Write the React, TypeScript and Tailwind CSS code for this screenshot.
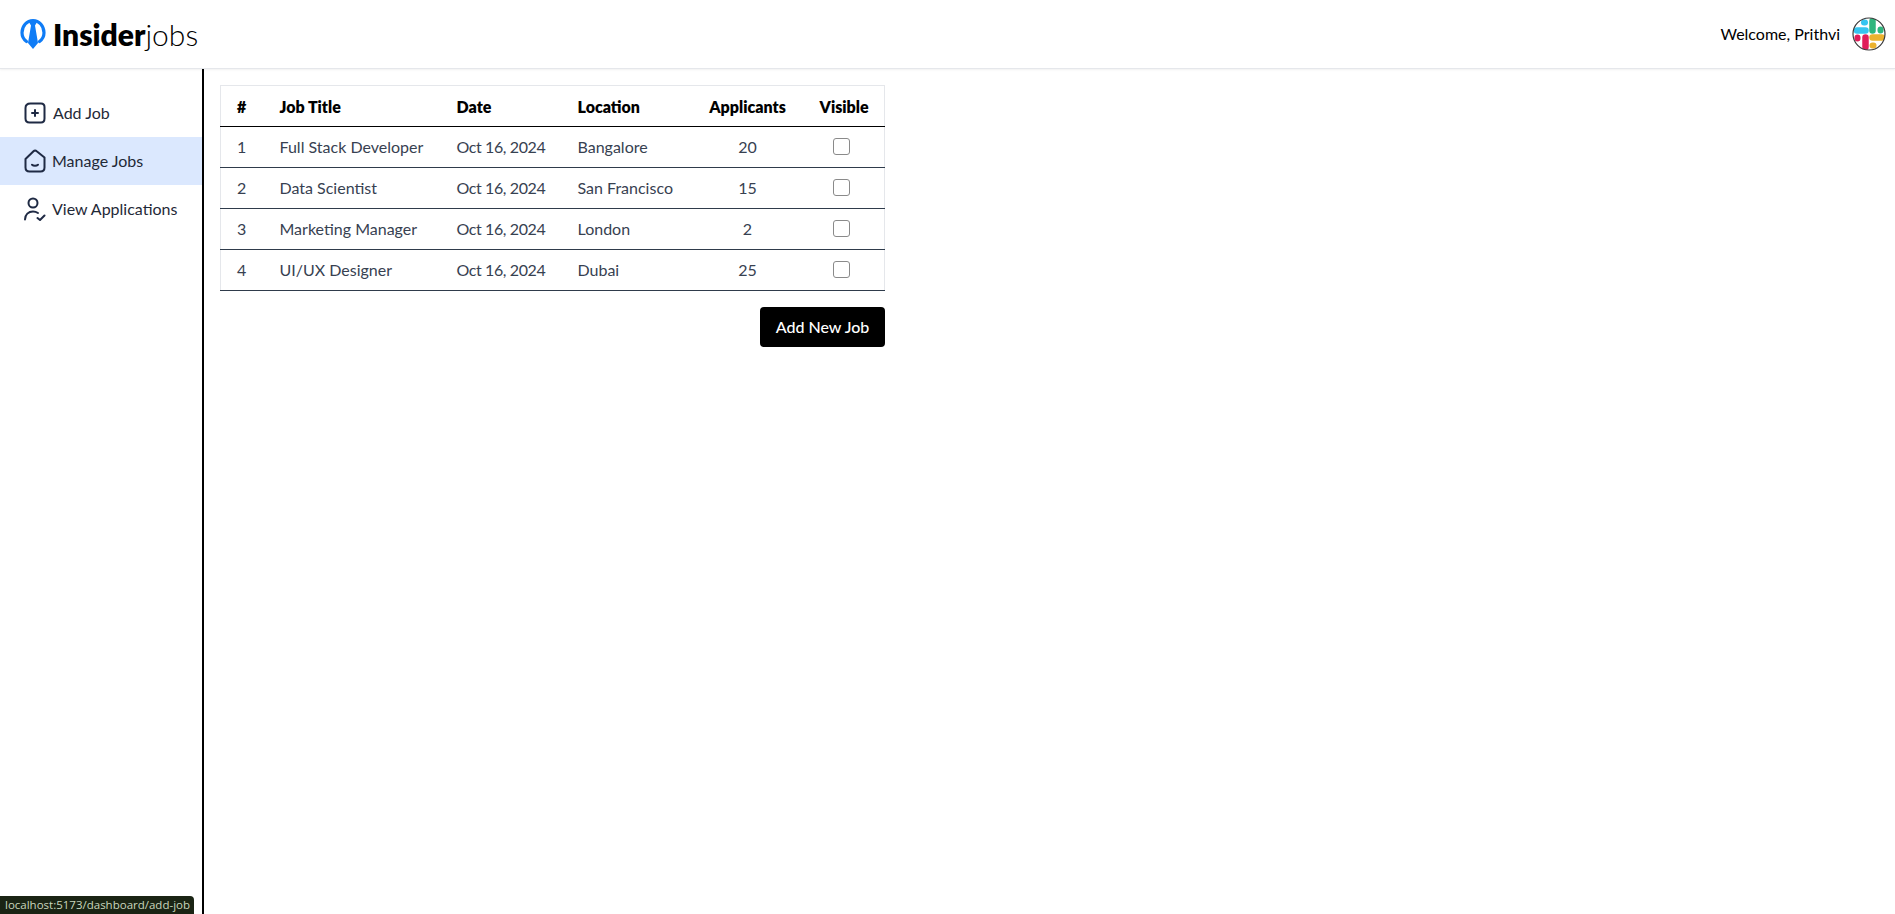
import React from "react";

const jobs = [
  { id: 1, title: "Full Stack Developer", date: "Oct 16, 2024", location: "Bangalore", applicants: 20 },
  { id: 2, title: "Data Scientist", date: "Oct 16, 2024", location: "San Francisco", applicants: 15 },
  { id: 3, title: "Marketing Manager", date: "Oct 16, 2024", location: "London", applicants: 2 },
  { id: 4, title: "UI/UX Designer", date: "Oct 16, 2024", location: "Dubai", applicants: 25 },
];

const Logo = () => (
  <svg width="26" height="32" viewBox="0 0 26 32" fill="none">
    <path d="M6.500 23.500C3.800 21.500 2 18.500 2 14.800C2 7.800 7 2.500 13 2.500C19 2.500 24 7.800 24 14.800C24 18.500 22.200 21.500 19.500 23.500" stroke="#0f7cf6" strokeWidth="3.200" strokeLinecap="round" />
    <path d="M8 2.500H18L15 7.500L18 25L13 31L8 25L11 7.500Z" fill="#0f7cf6" />
  </svg>
);

const AddIcon = () => (
  <svg width="22" height="22" viewBox="0 0 22 22" fill="none" stroke="#1f2a44" strokeWidth="2" strokeLinecap="round">
    <path d="M6.500 1.500H17C19.200 1.500 20.500 2.800 20.500 5V16.500C20.500 19 19.200 20.500 17 20.500H5.500C2.800 20.500 1.500 19 1.500 16.500V6C1.500 3.500 3 1.500 6.500 1.500Z" />
    <path d="M11 8V14M8 11H14" />
  </svg>
);

const ManageIcon = () => (
  <svg width="22" height="24" viewBox="0 0 22 24" fill="none" stroke="#1f2a44" strokeWidth="2" strokeLinecap="round" strokeLinejoin="round">
    <path d="M1.500 10L9.500 2.200C10.400 1.300 11.800 1.300 12.700 2.200L20.500 8.500V18.500C20.500 21 19 22.500 16.500 22.500H5.500C3 22.500 1.500 21 1.500 18.500Z" />
    <path d="M8 15.800C9.500 17.200 12.500 17.200 14 15.800" />
  </svg>
);

const PersonIcon = () => (
  <svg width="22" height="24" viewBox="0 0 22 24" fill="none" stroke="#1f2a44" strokeWidth="2" strokeLinecap="round" strokeLinejoin="round">
    <circle cx="9" cy="6" r="4.500" />
    <path d="M1 22.500C1 17.500 4.500 14.500 9 14.500C11 14.500 12.500 15 14 16" />
    <path d="M13.500 21L16 23L20.500 18.500" />
  </svg>
);

const SlackAvatar = () => (
  <svg width="34" height="34" viewBox="0 0 34 34" fill="none" strokeLinecap="round">
    <defs>
      <clipPath id="avatar-clip">
        <circle cx="17" cy="17" r="16" />
      </clipPath>
    </defs>
    <circle cx="17" cy="17" r="16" fill="#fff" />
    <g clipPath="url(#avatar-clip)">
      <path d="M5 13.500H13.500" stroke="#36c5f0" strokeWidth="6.500" />
      <path d="M12 5.500H13" stroke="#36c5f0" strokeWidth="6" />
      <path d="M20.500 4V13.500" stroke="#2eb67d" strokeWidth="6.500" />
      <path d="M28.500 12.500V13.500" stroke="#2eb67d" strokeWidth="6" />
      <path d="M20.500 20.500H30" stroke="#ecb22e" strokeWidth="6.500" />
      <path d="M20.500 28.500H21.500" stroke="#ecb22e" strokeWidth="6" />
      <path d="M13.500 20.500V30" stroke="#e01e5a" strokeWidth="6.500" />
      <path d="M5.500 20.500V21.500" stroke="#e01e5a" strokeWidth="6" />
    </g>
    <circle cx="17" cy="17" r="16" stroke="#3a3a3a" strokeWidth="1.200" />
  </svg>
);

export default function App() {
  return (
    <div className="h-screen flex flex-col bg-white overflow-hidden relative font-['Lato',sans-serif]">
      <header className="h-[69px] shrink-0 flex items-center justify-between pl-5 pr-[9px] border-b border-gray-200 shadow-[0_1px_2px_rgba(0,0,0,0.06)]">
        <div className="flex items-center">
          <Logo />
          <span className="ml-[7px] text-[30px] leading-none text-black">
            <span className="font-extrabold">Insider</span>
            <span className="font-light">jobs</span>
          </span>
        </div>
        <div className="flex items-center gap-3">
          <p className="text-[16px] text-black">Welcome, Prithvi</p>
          <SlackAvatar />
        </div>
      </header>

      <div className="flex flex-1 min-h-0">
        <aside className="w-[204px] shrink-0 border-r-2 border-black pt-5 text-[16px] text-[#1f2937]">
          <a className="h-12 flex items-center pl-6 gap-[7px]">
            <AddIcon />
            <span>Add Job</span>
          </a>
          <a className="h-12 flex items-center pl-6 gap-[6px] bg-[#dbe8fe]">
            <ManageIcon />
            <span>Manage Jobs</span>
          </a>
          <a className="h-12 flex items-center pl-6 gap-[6px]">
            <PersonIcon />
            <span>View Applications</span>
          </a>
        </aside>

        <main className="flex-1 pl-4 pt-4">
          <div className="w-[665px]">
            <table className="w-full table-fixed border border-gray-200 border-collapse text-[16px] text-[#374151] whitespace-nowrap">
              <thead>
                <tr className="h-[41px] border-b border-black text-black">
                  <th className="w-[43px] px-4 pt-[2px] text-left font-extrabold">#</th>
                  <th className="w-[177px] px-4 pt-[2px] text-left font-extrabold">Job Title</th>
                  <th className="w-[121px] px-4 pt-[2px] text-left font-extrabold">Date</th>
                  <th className="w-[130px] px-4 pt-[2px] text-left font-extrabold">Location</th>
                  <th className="w-[112px] pt-[2px] text-center font-extrabold">Applicants</th>
                  <th className="px-4 pt-[2px] text-left font-extrabold">Visible</th>
                </tr>
              </thead>
              <tbody>
                {jobs.map((job) => (
                  <tr key={job.id} className="h-[41px] border-b border-[#2f3b4b]">
                    <td className="px-4">{job.id}</td>
                    <td className="px-4">{job.title}</td>
                    <td className="px-4 tracking-[-0.4px]">{job.date}</td>
                    <td className="px-4">{job.location}</td>
                    <td className="text-center">{job.applicants}</td>
                    <td className="px-4">
                      <div className="ml-[13px] -mt-[2px] w-[17px] h-[17px] rounded-[3px] border-[1.500px] border-[#8a8a8a] bg-white" />
                    </td>
                  </tr>
                ))}
              </tbody>
            </table>
            <div className="mt-4 flex justify-end">
              <button className="w-[125px] h-10 rounded bg-black text-white text-[16px] font-medium">Add New Job</button>
            </div>
          </div>
        </main>
      </div>

      <div className="absolute left-0 bottom-0 h-[18px] w-[194px] rounded-tr-[4px] bg-[#1a2414] pl-[5px] text-[11.500px] leading-[18px] text-[#c9d6bd] font-['Open_Sans',sans-serif] whitespace-nowrap">
        localhost:5173/dashboard/add-job
      </div>
    </div>
  );
}
